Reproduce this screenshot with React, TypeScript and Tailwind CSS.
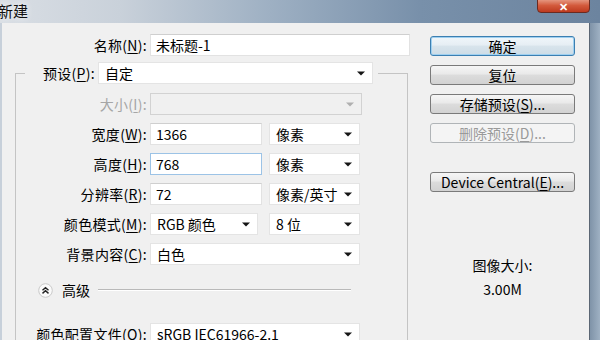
import React from 'react';

function Lbl({ name, k, w, disabled }: { name: string; k: string; w: string; disabled?: boolean }) {
  return (
    <div className={`${w} shrink-0 pr-[3px] text-right text-[14px] tracking-[0.3px] leading-none whitespace-nowrap ${disabled ? 'text-[#a6a6a6]' : 'text-black'}`}>
      {name}(<span className="underline underline-offset-2">{k}</span>):
    </div>
  );
}

function Arrow({ light }: { light?: boolean }) {
  return (
    <svg width="8" height="5" viewBox="0 0 8 5" className="shrink-0">
      <path d="M0 0.5h8L4 4.5z" fill={light ? '#b0b0b0' : '#151515'} />
    </svg>
  );
}

function Select({ value, w, disabled }: { value?: string; w: string; disabled?: boolean }) {
  return (
    <div
      className={`${w} h-[22px] shrink-0 flex items-center justify-between pl-[6px] pr-[7px] border text-[14px] leading-none ${
        disabled ? 'bg-[#f0f0f0] border-[#d2d2d2]' : 'bg-white border-[#e4e4e4]'
      }`}
    >
      <span className="whitespace-nowrap">{value}</span>
      <Arrow light={disabled} />
    </div>
  );
}

function Input({ value, w, focused }: { value: string; w: string; focused?: boolean }) {
  return (
    <div
      className={`${w} h-[22px] shrink-0 flex items-center pl-[5px] border text-[14px] leading-none bg-white ${
        focused ? 'border-[#9cc3e6]' : 'border-[#e2e2e2] border-t-[#cfcfcf]'
      }`}
    >
      {value}
    </div>
  );
}

function Btn({ children, focused, disabled }: { children: React.ReactNode; focused?: boolean; disabled?: boolean }) {
  let cls = 'border-[#7a7a7a] bg-[linear-gradient(#f6f6f6,#e9e9e9_45%,#dcdcdc_50%,#d2d2d2)] text-black';
  if (focused) cls = 'border-[#3c7fb1] bg-[linear-gradient(#f0f6fa,#e6eef4_45%,#d8e4ec_50%,#cddce6)] text-black shadow-[inset_0_0_0_1px_#9fd0f0]';
  if (disabled) cls = 'border-[#b0b4b7] bg-[#f4f4f4] text-[#9a9a9a]';
  return (
    <div className={`h-[20px] w-[145px] flex items-center justify-center rounded-[3px] border text-[14px] leading-none ${cls}`}>
      {children}
    </div>
  );
}

function Acc({ k }: { k: string }) {
  return <span className="underline underline-offset-2">{k}</span>;
}

export default function App() {
  return (
    <div className="w-[600px] h-[340px] overflow-hidden flex flex-col bg-[#8aa0b6] font-['Noto_Sans_CJK_SC','Noto_Sans',sans-serif] text-black">
      <div className="h-[23px] shrink-0 flex bg-[linear-gradient(90deg,#d9dee4_0%,#c9d1da_20%,#9eb0c3_45%,#7890aa_70%,#6c849f_100%)]">
        <div className="text-[15px] leading-none pt-[3px] -ml-[2px] text-[#111] [text-shadow:0_0_6px_#ffffff]">新建</div>
        <div className="flex-1" />
        <div className="mr-[10px] w-[53px] h-[15px] -mt-[2px] flex items-center justify-center rounded-b-[4px] border border-[#6b2a20] bg-[linear-gradient(#e8a08a,#d35a3c_50%,#bd3a1f)]">
          <span className="text-white text-[11px] font-bold leading-none mt-[2px]">✕</span>
        </div>
      </div>
      <div className="flex-1 flex">
        <div className="w-[2px] bg-[#c7d0da]" />
        <div className="w-[588px] flex bg-[#f0f0f0] border-r border-[#5b6674]">
          <div className="w-[418px] flex flex-col">
            <div className="mt-[11px] flex items-center h-[22px]">
              <Lbl name="名称" k="N" w="w-[148px]" />
              <Input value="未标题-1" w="w-[260px]" />
            </div>
            <fieldset className="ml-[13px] mt-[6px] w-[393px] border border-[#c4c4c4] border-b-0 px-0 pb-0 m-0">
              <legend className="ml-[9px] pr-[5px] flex items-center h-[22px]">
                <Lbl name="预设" k="P" w="w-[73px]" />
                <Select value="自定" w="w-[275px]" />
              </legend>
              <div className="flex flex-col gap-[8px] pt-[9px]">
                <div className="flex items-center h-[22px]">
                  <Lbl name="大小" k="I" w="w-[134px]" disabled />
                  <Select w="w-[212px]" disabled />
                </div>
                <div className="flex items-center h-[22px]">
                  <Lbl name="宽度" k="W" w="w-[134px]" />
                  <Input value="1366" w="w-[112px]" />
                  <div className="ml-[7px]"><Select value="像素" w="w-[91px]" /></div>
                </div>
                <div className="flex items-center h-[22px]">
                  <Lbl name="高度" k="H" w="w-[134px]" />
                  <Input value="768" w="w-[112px]" focused />
                  <div className="ml-[7px]"><Select value="像素" w="w-[91px]" /></div>
                </div>
                <div className="flex items-center h-[22px]">
                  <Lbl name="分辨率" k="R" w="w-[134px]" />
                  <Input value="72" w="w-[112px]" />
                  <div className="ml-[7px]"><Select value="像素/英寸" w="w-[91px]" /></div>
                </div>
                <div className="flex items-center h-[22px]">
                  <Lbl name="颜色模式" k="M" w="w-[134px]" />
                  <Select value="RGB 颜色" w="w-[108px]" />
                  <div className="ml-[11px]"><Select value="8 位" w="w-[91px]" /></div>
                </div>
                <div className="flex items-center h-[22px]">
                  <Lbl name="背景内容" k="C" w="w-[134px]" />
                  <Select value="白色" w="w-[210px]" />
                </div>
              </div>
              <div className="mt-[15px] h-[20px] flex items-center pl-[22px]">
                <svg width="15" height="15" viewBox="0 0 15 15">
                  <circle cx="7.5" cy="7.5" r="6.8" fill="#fafafa" stroke="#c9c9c9" />
                  <path d="M4.5 7.2L7.5 4.6L10.5 7.2M4.5 10.4L7.5 7.8L10.5 10.4" fill="none" stroke="#222" strokeWidth="1.4" />
                </svg>
                <span className="ml-[9px] text-[14px] leading-none">高级</span>
                <div className="ml-[8px] w-[253px] h-[2px] border-t border-[#b9b9b9] border-b border-b-white" />
              </div>
              <div className="mt-[23px] flex items-center h-[22px]">
                <Lbl name="颜色配置文件" k="O" w="w-[134px]" />
                <Select value="sRGB IEC61966-2.1" w="w-[210px]" />
              </div>
            </fieldset>
          </div>
          <div className="ml-[10px] flex flex-col pt-[13px]">
            <div className="flex flex-col gap-[9px]">
              <Btn focused>确定</Btn>
              <Btn>复位</Btn>
              <Btn>存储预设(<Acc k="S" />)...</Btn>
              <Btn disabled>删除预设(<Acc k="D" />)...</Btn>
            </div>
            <div className="mt-[29px]">
              <Btn>Device Central(<Acc k="E" />)...</Btn>
            </div>
            <div className="mt-[66px] flex flex-col items-center text-[14px] leading-none">
              <div>图像大小:</div>
              <div className="mt-[10px]">3.00M</div>
            </div>
          </div>
        </div>
        <div className="flex-1 bg-[linear-gradient(90deg,#7f93a8,#9fb1c3)]" />
      </div>
    </div>
  );
}
